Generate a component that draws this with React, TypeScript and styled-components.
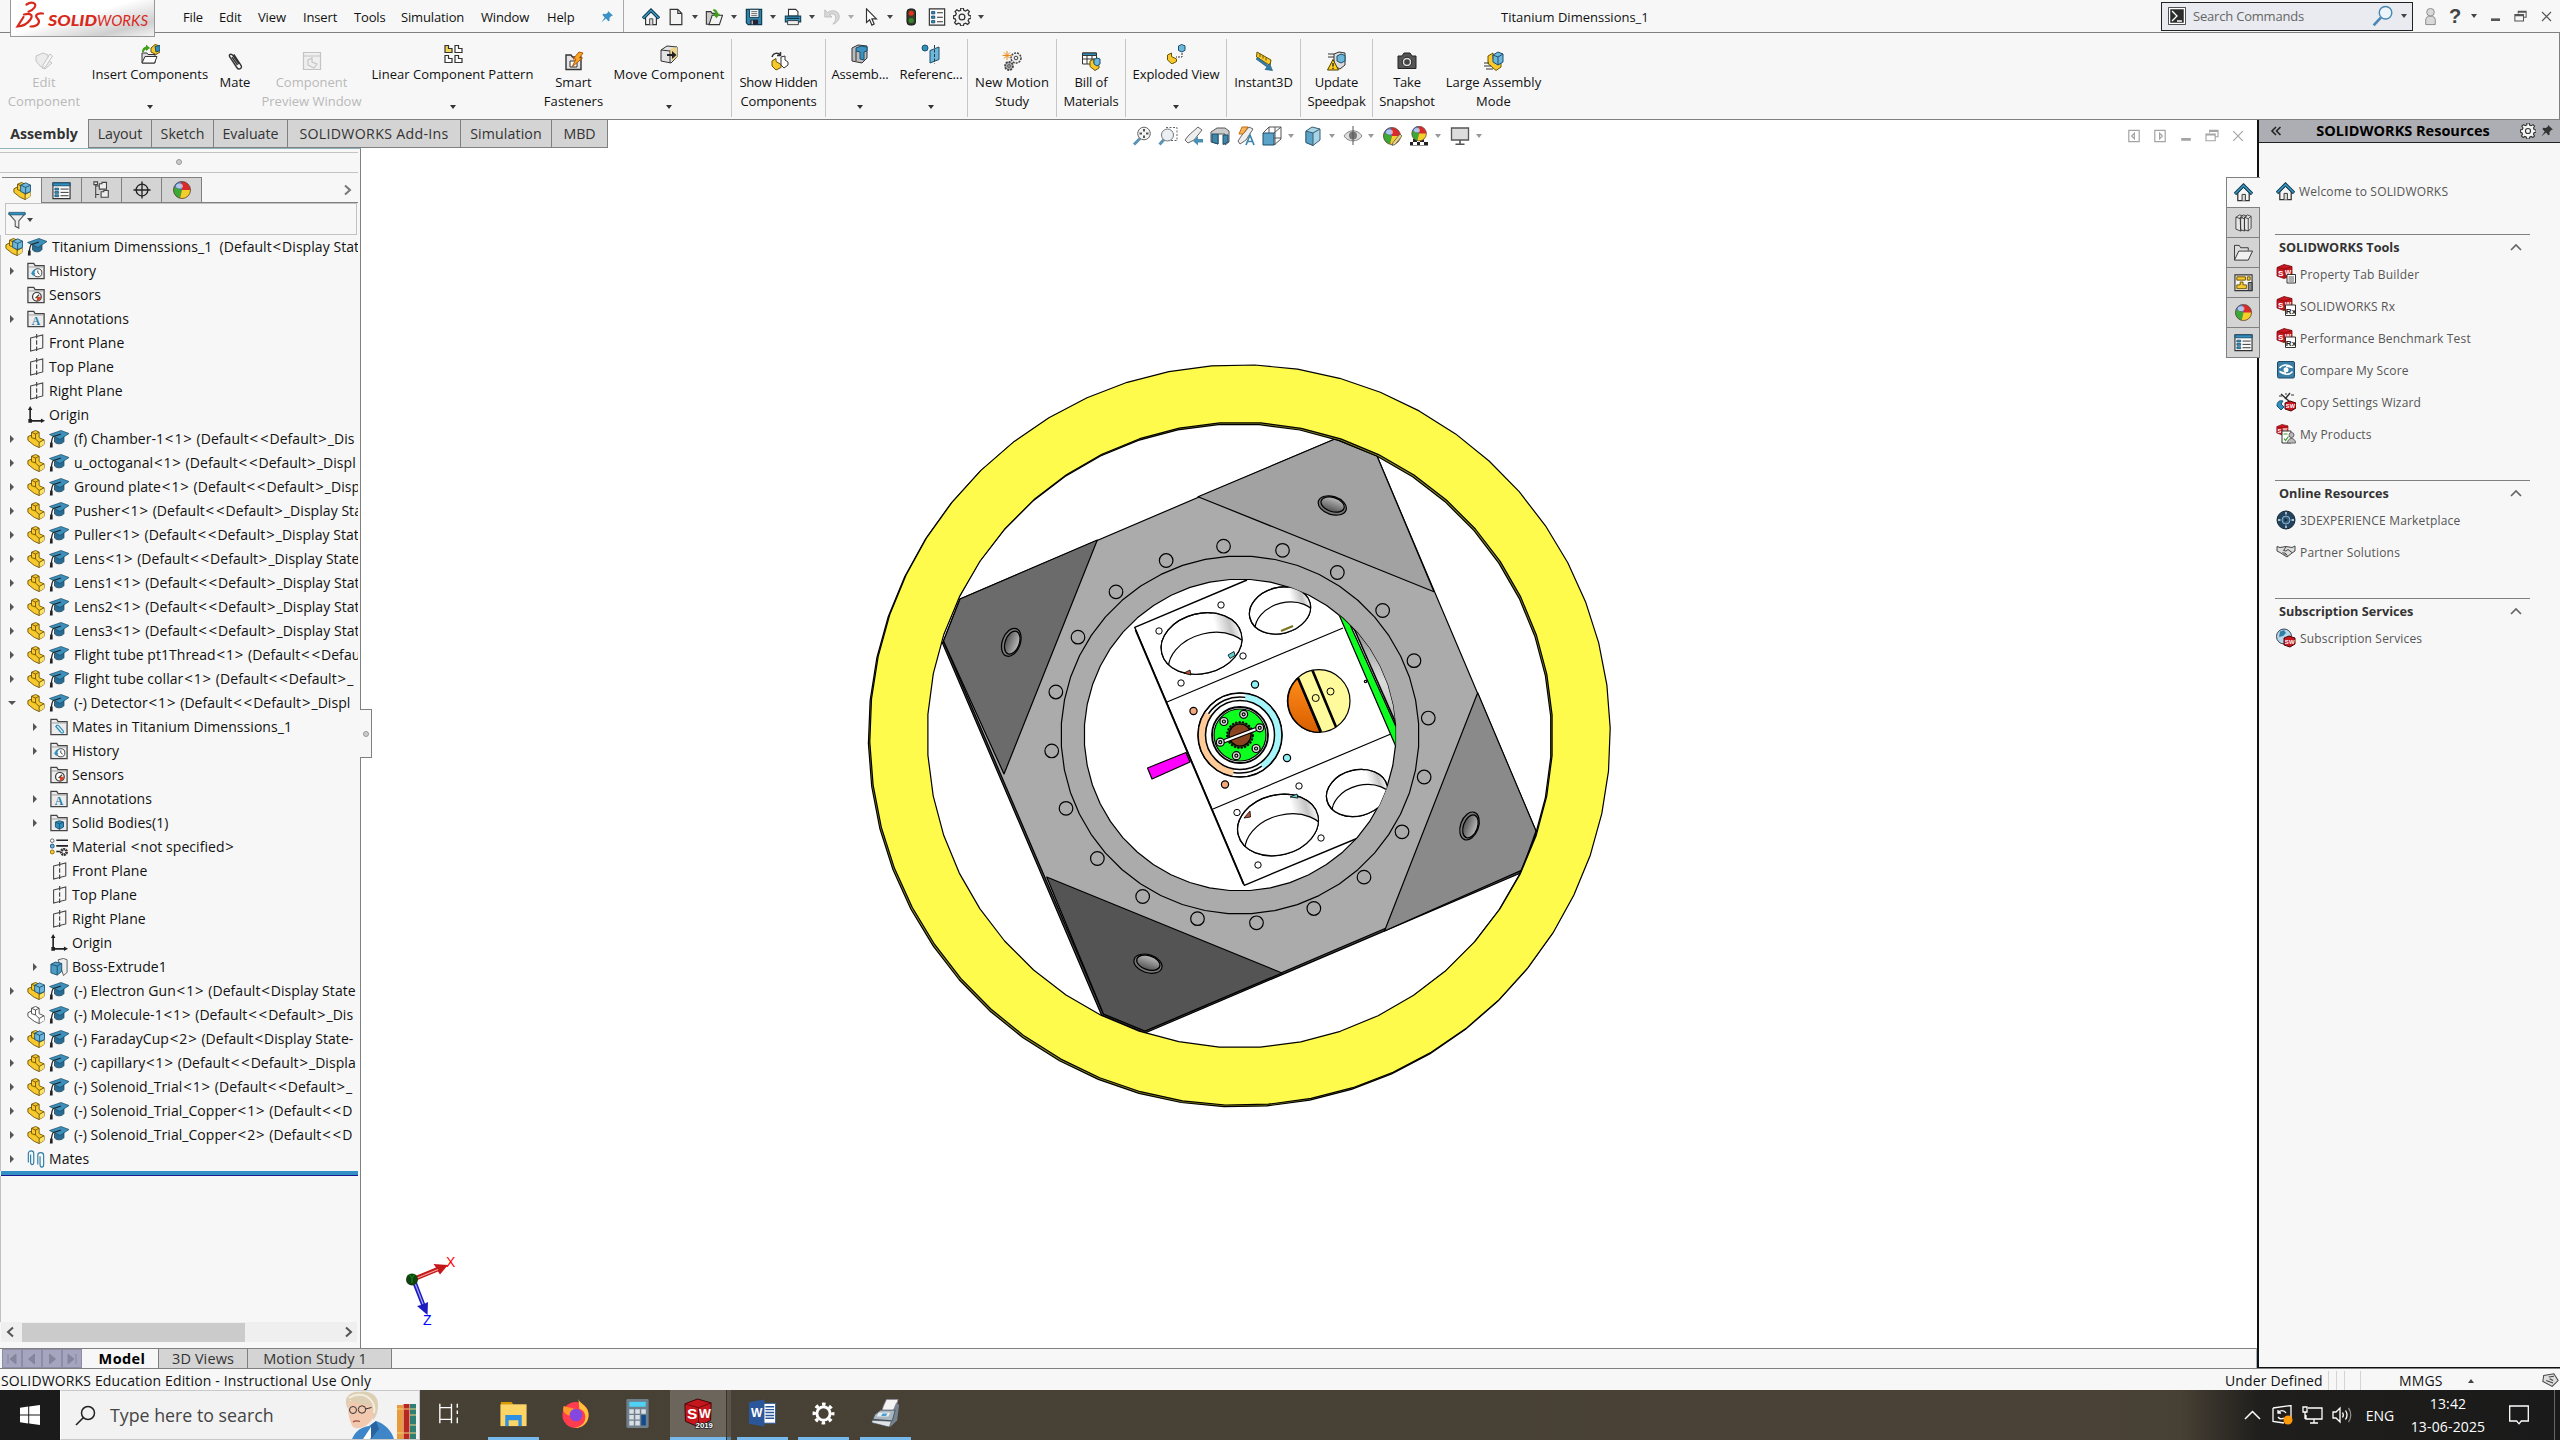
import React from "react";
import styled, { createGlobalStyle } from "styled-components";

const UI = '"Open Sans", "Noto Sans", "Liberation Sans", sans-serif';
const LINE = "#808080";
const PANEL = "#f7f7f7";

const Global = createGlobalStyle`
  html, body { margin: 0; padding: 0; background: #fff; overflow: hidden; }
  *, *::before, *::after { box-sizing: border-box; }
  body { font-family: ${UI}; font-size: 14px; color: #111; }
  svg { display: block; flex: none; }
`;

/* ---------------------------------------------------------------- icons */

const K = "#333";
const B = "#2f8fbd";
const DB = "#1c4f6e";
const Y = "#f7c92c";

const partShape = (fill: string, side: string, line: string) => (
  <g stroke={line} strokeWidth="1" strokeLinejoin="round">
    <path d="M1 7.500 5 5.500V2.500l4.500-2 4 2v6L19 11v5l-5.500 3.500L8 17l-7-5.500z" fill={fill} />
    <path d="M13.500 14.200l5.500-3v4.800l-5.500 3.300z" fill={side} stroke="none" />
    <path d="M5 2.500l4.500 2 4-2M9.500 4.500V10l4 3.800 5.500-3M13.500 13.800v5.500M5 5.500v3l4.500 1.500" fill="none" />
  </g>
);
const folder = (
  <g>
    <path d="M1 18.500V1.500h6.500L9 4h10v14.500z" fill="#ececec" stroke="#444" strokeWidth="1.400" />
    <path d="M1.500 5.500h17" stroke="#999" fill="none" />
  </g>
);
const swCube = (
  <g>
    <path d="M1 3.500 8 .5l8 2v9l-8 3-7-2.500z" fill="#c8171e" stroke="#7a0c10" strokeWidth=".8" />
    <path d="M1 3.500l8 1.700 7-2.700M9 5.200v9" stroke="#7a0c10" strokeWidth=".7" fill="none" />
    <text x="2" y="11.500" fontSize="8" fontWeight="700" fill="#fff">S</text>
    <text x="9" y="11" fontSize="6.500" fontWeight="700" fill="#fff">W</text>
  </g>
);
const ball = (
  <g>
    <circle cx="10" cy="10" r="8.500" fill="#d92b2b" />
    <path d="M10 10 2 7a8.500 8.500 0 0 1 7-5.500z" fill="#4a83d8" />
    <path d="M10 10 2 7a8.500 8.500 0 0 0 6 11.300z" fill="#3aa935" />
    <path d="M10 10 8 18.300A8.500 8.500 0 0 0 18.500 10z" fill="#f2cf2a" />
    <ellipse cx="7.500" cy="6" rx="3.500" ry="2.500" fill="#fff" opacity=".55" />
    <circle cx="10" cy="10" r="8.500" fill="none" stroke="#5a4a3a" strokeWidth=".8" />
  </g>
);
const cubeBlue = (
  <g stroke={DB} strokeWidth="1" strokeLinejoin="round">
    <path d="M8.500 3.500 14 1l5.500 2.500v7L14 13 8.500 10.500z" fill="#6cb8dc" />
    <path d="M8.500 3.500 14 6l5.500-2.500M14 6v7" fill="none" />
  </g>
);
const gearPath =
  "M8.500 1h3l.5 2.500 2 .9 2.200-1.400 2 2-1.400 2.200.9 2 2.300.5v2.800l-2.300.5-.9 2 1.400 2.200-2 2-2.200-1.400-2 .9-.5 2.300h-3l-.5-2.300-2-.9-2.200 1.400-2-2 1.400-2.200-.9-2L.5 12.500V9.700l2.300-.5.9-2L2.300 5l2-2 2.200 1.400 2-.9z";

const ICONS: Record<string, React.ReactNode> = {
  home: (
    <g>
      <path d="M4 10v8.500h12V10l-6-6z" fill="#f5f5f5" stroke={K} strokeWidth="1.300" />
      <path d="M8.500 18.500V12h3.500v6.500" fill="#ddd" stroke={K} />
      <path d="M1 11.500 10 2.500l9 9" fill="none" stroke="#0f3b53" strokeWidth="3.600" />
      <path d="M1.500 11 10 2.600l8.500 8.400" fill="none" stroke="#3d9cc8" strokeWidth="1.500" />
    </g>
  ),
  new: <path d="M3.500 1.500h8.500l4.500 4.500v12.500h-13zM12 1.500V6h4.500" fill="#f4f4f4" stroke={K} strokeWidth="1.300" />,
  open: (
    <g>
      <path d="M1.500 18V4h5l1.500 2h6v12z" fill="#ccc" stroke={K} strokeWidth="1.200" />
      <path d="M4.500 18.500 8 8h11.500L16 18.500z" fill="#f3f3f3" stroke={K} strokeWidth="1.200" />
      <path d="M9 1.500c4 0 5 2 5 5h3L12.700 11.500 8.500 6.500h2.800c0-2-.8-3-2.300-3.200z" fill="#3fa21c" />
    </g>
  ),
  save: (
    <g>
      <path d="M1.500 1.500h17v17H3.500l-2-2z" fill="#3182a8" stroke="#103c52" strokeWidth="1.300" />
      <path d="M5 1.500h10.500v9H5z" fill="#f1f1f1" stroke="#103c52" />
      <path d="M7 4h6.500M7 6.200h6.500M7 8.400h6.500" stroke="#666" />
      <path d="M6 13h8.500v5.500H6z" fill="#223" />
      <path d="M8 14v4" stroke="#ddd" strokeWidth="1.300" />
    </g>
  ),
  print: (
    <g>
      <path d="M5 9V1.500h8l2.500 2.500v5z" fill="#fff" stroke={K} strokeWidth="1.200" />
      <path d="M1.500 9h17v6.500h-17z" fill="#3a93bb" stroke="#12445c" strokeWidth="1.300" />
      <path d="M4 14h12v4.500H4z" fill="#eee" stroke={K} />
      <path d="M3 11.500h14" stroke="#0d3244" strokeWidth="1.300" />
    </g>
  ),
  undo: <path d="M2 2v8h8L7 7.300c4-2 8 0 7 5.200-.3 2-1.500 3.700-3 5.500 4-1.500 7-4.200 7-8.500C18 3.500 11 1 5 5z" fill="#d8d8d8" stroke="#bbb" />,
  cursor: <path d="M5 1v15l3.500-3 2.500 6 2.500-1.200-2.500-5.800H16z" fill="#fff" stroke={K} strokeWidth="1.300" />,
  light: (
    <g>
      <rect x="5.500" y="1" width="9.500" height="18" rx="3.500" fill="#3a3a2c" stroke="#111" />
      <circle cx="10.200" cy="5.800" r="2.800" fill="#e6321c" />
      <circle cx="10.200" cy="13.800" r="2.800" fill="#2f8a2a" />
    </g>
  ),
  list: (
    <g>
      <path d="M1.500 1h17v18h-17z" fill="#fafafa" stroke={K} strokeWidth="1.300" />
      <path d="M4 4h3.500v2.500H4zM4 9h3.500v2.500H4zM4 14h3.500v2.500H4z" fill={B} stroke={DB} />
      <path d="M10 5.200h6.500M10 10.200h6.500M10 15.200h6.500" stroke={K} strokeWidth="1.200" />
    </g>
  ),
  proplist: (
    <g>
      <path d="M1 2h18v16.500H1z" fill="#fafafa" stroke={K} strokeWidth="1.200" />
      <path d="M1 2h18v3H1z" fill={B} stroke={DB} />
      <path d="M3 7.500h4v2H3zM3 11h4v2H3zM3 14.500h4v2H3z" fill={B} stroke={DB} strokeWidth=".8" />
      <path d="M9 8.500h8.500M9 12h8.500M9 15.500h8.500" stroke={K} />
    </g>
  ),
  gear: (
    <g transform="translate(0 -1)">
      <path d={gearPath} fill="#f5f5f5" stroke="#333" strokeWidth="1.400" />
      <circle cx="10" cy="11" r="3.200" fill="#f5f5f5" stroke="#333" strokeWidth="1.400" />
    </g>
  ),
  pin: <path d="M11.500 1.500 18.500 8l-2.300.5-2.700 3 .2 4-1.700.5-3.500-3.800L2 18l4.700-7.200L3.500 7.200l1-1.700 4 .3 2.700-2.300z" fill="#3a93c4" />,
  pinDark: <path d="M11.500 1.500 18.500 8l-2.300.5-2.700 3 .2 4-1.700.5-3.500-3.800L2 18l4.700-7.200L3.500 7.200l1-1.700 4 .3 2.700-2.300z" fill="#333" />,
  prompt: (
    <g>
      <path d="M.5 .5h19v19H.5z" fill="#fff" stroke={K} />
      <path d="M2.500 2.500h15v15h-15z" fill="#2c2c2c" />
      <path d="M4.500 4.500 10 10l-5.500 5.500M10 15.500h5.500" fill="none" stroke="#fff" strokeWidth="1.500" />
    </g>
  ),
  mag: (
    <g>
      <path d="M1.500 18.500 8 11.500" stroke="#4a86b4" strokeWidth="2.400" />
      <circle cx="12.300" cy="7" r="5.700" fill="#eef5fa" stroke="#4a86b4" strokeWidth="1.300" />
    </g>
  ),
  user: (
    <g fill="#d9d9d9" stroke="#888">
      <path d="M5 18.500v-5c0-2.500 2-4 5-4s5 1.500 5 4v5z" />
      <circle cx="10" cy="5.500" r="4" />
    </g>
  ),
  min: <path d="M4 12.500h12v3.500H4z" fill="currentColor" />,
  restore: <path d="M7 6V3h10.500v8H14M2.500 7.500H14V16H2.500zM2.500 8.800H14M7 4.300h10.500" fill="none" stroke="currentColor" strokeWidth="1.400" />,
  close: <path d="M4 4l12 12M16 4 4 16" stroke="currentColor" strokeWidth="1.500" />,
  dockL: <path d="M3.500 3h13v14h-13zM10.500 6.500v7L7 10z" fill="none" stroke="currentColor" strokeWidth="1.500" />,
  dockR: <path d="M3.500 3h13v14h-13zM9.500 6.500v7L13 10z" fill="none" stroke="currentColor" strokeWidth="1.500" />,
  editComp: (
    <g stroke="#c4c4c4" fill="#ececec">
      <path d="M2 5l7-3 5 2v5l4 3-7 6-5-3-4-5z" />
      <path d="M16 3l2.500 2-7 11-3 1.500.5-3.500z" fill="#f6f6f6" />
    </g>
  ),
  insertComp: (
    <g>
      <path d="M2 19V9h5l1 1.500h7V19z" fill="#ddd" stroke={K} />
      <path d="M2 19l3-6.500h12L14.500 19z" fill="#fff" stroke={K} />
      <path d="M2 8c0-3 1.500-5 4-5.500V.5l4 3.500-4 3V5.500C4.500 6 4 7 4 8z" fill="#3fa21c" />
      <path d="M11 4l4-3.500L20 2v6l-4 2.500L11 8z" fill={Y} stroke="#6b5200" />
      <path d="M15 2.500l5-1v5l-4 1.500z" fill={B} stroke={DB} />
    </g>
  ),
  clip: <path d="M14 13 8 4.500C6 2 3.500 3.500 4.800 6l7 10.500c2 3 6 1 4.200-2.200L8.800 3.500M12.500 14 7 6.200" fill="none" stroke={K} strokeWidth="1.400" />,
  preview: (
    <g fill="#efefef" stroke="#c4c4c4" strokeWidth="1.200">
      <path d="M1.500 1.500h17v17h-17zM1.500 5h17" />
      <path d="M6 9l4-2v4l5 2-3 4-6-3z" />
    </g>
  ),
  pattern: (
    <g strokeWidth="1.200" stroke={K} fill="#fff">
      <path d="M2 1.500h3.500v3H9v4H2z" fill="#f4d657" />
      <path d="M12 1.500h3.500v3H19v4h-7zM2 11.500h3.500v3H9v4H2zM12 11.500h3.500v3H19v4h-7z" />
    </g>
  ),
  smart: (
    <g>
      <path d="M2 18.500V4h5l1.500 2H17v12.500z" fill="#e5e5e5" stroke={K} strokeWidth="1.400" />
      <path d="M6 10h7v6H6z" fill="#fff" stroke={K} />
      <path d="M15 1l4 1-3.500 5h3L8 16l4-8H9z" fill="#f6a623" stroke="#b34a00" strokeWidth=".9" />
    </g>
  ),
  moveComp: (
    <g>
      <path d="M2 6l6-4 10 1v10l-6 6-10-2z" fill="#e3e3e3" stroke={K} />
      <path d="M2 6l9 1 7-4M11 7v12" fill="none" stroke={K} />
      <path d="M11 5l7-2v10l-5 4z" fill="#efd58a" />
      <path d="M8 10h5V7l4.500 4-4.500 4v-3H8z" fill="#222" />
    </g>
  ),
  hidden: (
    <g>
      <path d="M3 10l4-2.500v3l5 3v3L7 19l-4-4z" fill={Y} stroke="#6b5200" />
      <path d="M12 6l4-1v4l3 2v3l-4 3-3-3z" fill="#fff" stroke={K} />
      <path d="M3 6c1-4 6-5 8-2M11.500 1v3.500H8" fill="none" stroke={K} strokeWidth="1.500" />
    </g>
  ),
  assemb: (
    <g>
      <path d="M2 4l6-3 9 1v12l-5 5-10-2z" fill="#bbb" stroke={K} />
      <path d="M6 4l5-2 6 1v4l-3 1v8l-4-1V8L6 7z" fill="#3d93bf" stroke={DB} />
      <path d="M6 7v10" stroke={K} />
    </g>
  ),
  reference: (
    <g>
      <circle cx="4" cy="4" r="3" fill={B} stroke={DB} />
      <path d="M9 6.500 18 3v12.500L9 19z" fill="#6cb8dc" stroke={DB} />
      <path d="M13.500 1v18.500" stroke={K} strokeDasharray="3 1.500" />
    </g>
  ),
  motion: (
    <g fill="#eee" stroke="#444">
      <circle cx="14" cy="7" r="5" strokeDasharray="2 1" strokeWidth="1.500" />
      <circle cx="14" cy="7" r="1.800" />
      <circle cx="7" cy="15" r="4" strokeDasharray="2 1" strokeWidth="1.800" fill="#aaa" />
      <circle cx="7" cy="15" r="1.300" />
      <path d="M5 0v9M.5 4.500h9M2 1.500l6 6M8 1.500l-6 6" stroke="#e88a1c" />
    </g>
  ),
  bom: (
    <g>
      <path d="M1.500 2h14v11h-14z" fill="#fff" stroke={K} />
      <path d="M1.500 2h14v2.500h-14z" fill={B} stroke={K} />
      <path d="M1.500 8h14M6 4v9M11 4v9" stroke={K} />
      <path d="M9 10l4-2v4l5 2.500V17l-4 2.500-5-4z" fill={Y} stroke="#6b5200" />
      <path d="M13 8.500l3-1.500 3 1v5l-3 2-3-2z" fill="#6cb8dc" stroke={DB} />
    </g>
  ),
  exploded: (
    <g>
      <path d="M1.500 11l4-2v3.500l5 2.500v2.500L6 20l-4.500-4z" fill={Y} stroke="#6b5200" />
      <path d="M12.500 2l3-1.500 3.500 1.300v4.500L16 8l-3.500-1.500z" fill="#6cb8dc" stroke={DB} />
      <path d="M16 9v4h-6" fill="none" stroke={K} strokeDasharray="2 1" />
    </g>
  ),
  instant: (
    <g>
      <path d="M3 1l14 8-1 5.500L2.500 6z" fill={Y} stroke="#6b5200" />
      <path d="M6 3v3M9 4.500v3M12 6.500v3" stroke="#6b5200" />
      <path d="M2 8l11 8-2 2.500 7.500 1-3-7-1.500 2L4 6.500z" fill="#2f7fa8" stroke={DB} strokeWidth=".6" />
    </g>
  ),
  update: (
    <g>
      <path d="M7 3l5-2 6 1v12l-5 4-6-3z" fill="#ddd" stroke={K} />
      <path d="M10 5l4-2 4 1.500V10l-4 2-4-2z" fill="#6cb8dc" stroke={DB} />
      <path d="M1 3h6M1 6h6" stroke={K} />
      <path d="M6 8.500 11.500 19H.5z" fill="#ffd21c" stroke="#4a3a00" />
      <path d="M6 12v3.500M6 16.700v1.300" stroke="#222" strokeWidth="1.400" />
    </g>
  ),
  camera: (
    <g>
      <path d="M1 5h4l2-3h6l2 3h4v12.500H1z" fill="#555" stroke="#222" />
      <circle cx="10" cy="11" r="4.800" fill="#ddd" stroke="#222" />
      <circle cx="10" cy="11" r="2.800" fill="#444" />
    </g>
  ),
  large: (
    <g>
      <path d="M4 5l5-3v6l8 4v4l-5 3.500-8-7z" fill={Y} stroke="#6b5200" />
      <path d="M9 4l5-3 5 2v8l-5 3-5-3z" fill="#6cb8dc" stroke={DB} />
      <path d="M9 4l5 2 5-3M14 6v8" fill="none" stroke={DB} />
      <path d="M0 12h5M0 15h7M2 18h7" stroke={K} />
    </g>
  ),
  zoomFit: (
    <g>
      <path d="M2 18.500 8 12.500" stroke="#5b93b4" strokeWidth="3" />
      <circle cx="12" cy="7.500" r="6.300" fill="#f4f4f4" stroke="#666" />
      <path d="M12 3v9M7.500 7.500h9" stroke="#555" strokeDasharray="2.500 4" strokeWidth="2" />
    </g>
  ),
  zoomArea: (
    <g>
      <path d="M8 1.500h11v13H8" fill="none" stroke="#666" strokeDasharray="2 1.500" />
      <path d="M1.500 18.500 6 13.500" stroke="#5b93b4" strokeWidth="3" />
      <circle cx="9.500" cy="9" r="6" fill="#eaf0f4" stroke="#777" />
    </g>
  ),
  prev: (
    <g>
      <path d="M14 1l4 3-8 10-6 3-3-3 4-5z" fill="#eee" stroke="#666" />
      <path d="M19 13h-5v-3l-5 5 5 4.500v-3h5z" fill="#4a8fb5" />
    </g>
  ),
  section: (
    <g>
      <path d="M1 6l6-4h8l4 3v11l-4 3V8H8v10l-7-2z" fill="#ccc" stroke="#555" />
      <path d="M2 8h6v10l-6-2zM13 9h5v7l-5 2.500z" fill="#3f86ab" stroke={DB} />
    </g>
  ),
  dyn: (
    <g>
      <path d="M13 1l4 2-7 11-6 4-2-3 4-6z" fill="#eee" stroke="#666" />
      <path d="M6 1h6l-5 7H3z" fill="#f7b45a" stroke="#c46a10" />
      <path d="M10 19l4-10 4 10M11.500 15.500h5" fill="none" stroke="#3f86ab" strokeWidth="1.700" />
    </g>
  ),
  orient: (
    <g>
      <path d="M1 7h11v12H1z" fill="#5ba3c8" stroke={DB} />
      <path d="M1 7l6-6h12v12l-7 6M12 7l7-6M7 1v6M13 1v18M12 12h7" fill="none" stroke="#555" />
    </g>
  ),
  display: (
    <g strokeLinejoin="round" stroke="#3a5e70">
      <path d="M3 5l6-4 8 2v11l-7 5.500-7-3z" fill="#a9d4e8" />
      <path d="M3 5l7 2v12.500l-7-3z" fill="#5ba3c8" />
      <path d="M10 7l7-4" fill="none" />
    </g>
  ),
  eye: (
    <g>
      <path d="M1 10c4-7 14-7 18 0-4 6.500-14 6.500-18 0z" fill="#ddd" stroke="#888" />
      <circle cx="10" cy="9.500" r="4" fill="#777" />
      <path d="M10 0v19" stroke="#555" />
    </g>
  ),
  ball,
  ballPen: (
    <g>
      {ball}
      <path d="M18 8l2 2-7 8.500-3 1 1-3z" fill="#f0d58a" stroke="#555" strokeWidth=".8" />
    </g>
  ),
  scene: (
    <g>
      <path d="M1 13h18v6.500H1z" fill="#222" />
      <path d="M1 13h3v3H1zM8 13h3v3H8zM15 13h4v3h-4zM4 16h4v3H4zM11 16h4v3h-4z" fill="#fff" />
      <g transform="translate(1.500 -1) scale(.86)">{ball}</g>
    </g>
  ),
  monitor: (
    <g>
      <path d="M1.500 2h17v12h-17z" fill="#ddd" stroke="#555" strokeWidth="1.300" />
      <path d="M10 14v4M5.500 18.300h9" stroke="#555" strokeWidth="1.600" />
    </g>
  ),
  part: partShape(Y, "#fbe26a", "#6b5200"),
  partHidden: partShape("#fff", "#fff", "#444"),
  asm: (
    <g>
      {partShape(Y, "#fbe26a", "#6b5200")}
      {cubeBlue}
    </g>
  ),
  cap: (
    <g>
      <path d="M5.500 8.500V13c3 3 8 2 9.500-.5V7.500z" fill="#2a6d92" stroke="#123c52" strokeWidth=".7" />
      <path d="M.5 5.500 12 1.500l8 3L11 10.500z" fill="#3b8fbb" stroke="#174a64" strokeWidth=".7" />
      <path d="M12 5 4 7.700c-1.500 2.500-1.300 5-2 8.500" fill="none" stroke="#222" strokeWidth="1.200" />
      <path d="M1.300 13.500h2.300v5H.8z" fill="#222" />
    </g>
  ),
  fHistory: (
    <g>
      {folder}
      <circle cx="12" cy="12" r="4.500" fill="#fff" stroke={K} />
      <path d="M12 9.500V12l2 1.500" fill="none" stroke={K} />
      <path d="M4 12l3 3.500 2.500-3H8c0-2 1-3.500 3-4.500-4-.5-5.500 2-5.500 4z" fill={B} />
    </g>
  ),
  fSensor: (
    <g>
      {folder}
      <circle cx="11" cy="12" r="4.800" fill="#fff" stroke={K} strokeWidth="1.300" />
      <path d="M11 12h4.500c0 2.500-2 4.500-4.500 4.500z" fill="#e0401c" />
      <path d="M9.500 13.500 13.500 9.500" stroke={K} strokeWidth="1.300" />
    </g>
  ),
  fAnno: (
    <g>
      {folder}
      <text x="5.200" y="16.800" fontSize="13" fontWeight="700" fontFamily="Liberation Serif, serif" fill="#2a7fa8">A</text>
    </g>
  ),
  fMates: (
    <g>
      {folder}
      <path d="M6 9l6 7c2 1.500 4 0 2.500-2L9.500 8.500C8 7 6 8.500 7.500 10.500l4.500 5" fill="none" stroke={B} strokeWidth="1.300" />
    </g>
  ),
  fSolid: (
    <g>
      {folder}
      <path d="M6 9l4.500-1.500L15 9v5.500L10.500 17 6 14.500z" fill={B} stroke={DB} />
      <path d="M6 9l4.500 2L15 9M10.500 11v6" fill="none" stroke={DB} />
    </g>
  ),
  plane: (
    <g fill="none" stroke="#444">
      <path d="M4 4.500 17.500 1v14.500L4 19z" strokeWidth="1.200" />
      <path d="M10.700 0v20" strokeDasharray="5 2" strokeWidth="1.300" />
    </g>
  ),
  origin: (
    <g>
      <path d="M3.500 3v13.500H17" fill="none" stroke="#222" strokeWidth="1.800" />
      <path d="M3.500 0 6 4.500H1zM20 16.500 15.500 14v5zM1.500 14.500h4v4h-4z" fill="#222" />
    </g>
  ),
  material: (
    <g>
      <circle cx="2.500" cy="3" r="2" fill="#fff" stroke="#555" />
      <circle cx="2.500" cy="9" r="2.200" fill="#5fb2dc" stroke={DB} />
      <circle cx="2.500" cy="15.500" r="2.200" fill={Y} stroke="#8a6a00" />
      <path d="M7 2.500h13M7 8.800h13M7 15h4" stroke="#222" strokeWidth="1.800" />
      <circle cx="15.500" cy="15.500" r="3" fill="none" stroke="#333" strokeWidth="3" strokeDasharray="2 .6" />
    </g>
  ),
  boss: (
    <g>
      <path d="M9 2l6-1.500 4 1.500v14l-4 3.500z" fill="#eee" stroke="#555" />
      <path d="M1 7l5-2.500L13 6v9l-5 4-7-2.500z" fill="#4c9cc4" stroke={DB} />
      <path d="M1 7l7 2 5-3M8 9v10" fill="none" stroke={DB} />
    </g>
  ),
  mates: (
    <path d="M1.500 14V4c0-4 6-4 6 0v10c0 3-3.500 3-3.500 0V5M12 16V6c0-4 6.500-4 6.500 0v10c0 4-4 4-4 0V7" fill="none" stroke="#2f7fa8" strokeWidth="1.300" />
  ),
  config: (
    <g fill="none" stroke="#444" strokeWidth="1.200">
      <path d="M3 1v18M3 5.500h4M3 15h4" />
      <path d="M1 1h4v3H1zM7 3h3V1.500h5V9H7zM9 12h3v-1.500h5V18H9z" fill="#eee" />
    </g>
  ),
  target: (
    <g fill="none" stroke="#222" strokeWidth="1.500">
      <circle cx="10" cy="10" r="6.500" />
      <path d="M10 .5v19M.5 10h19" />
    </g>
  ),
  filter: (
    <g>
      <path d="M1 3h18l-7 8v8l-4-2v-6z" fill="#eee" stroke="#555" strokeWidth="1.200" />
      <path d="M1 1.500h18v2.800H1z" fill="#2f8fbd" stroke={DB} strokeWidth=".8" />
    </g>
  ),
  books: (
    <g fill="#e6e6e6" stroke={K} strokeWidth=".9" strokeLinejoin="round">
      <path d="M2 4.500 6 2l4 1.500v13L7 19l-5-2z" />
      <path d="M6.500 4.500 10 2l3.500 1.500v13L11 19l-4-1.500z" />
      <path d="M11 4.500 14 2l4 1.500V16l-3 3-4-1.500z" />
      <path d="M2 4.500l5 1.500v13M6.500 4.500 11 6v13M11 4.500l4 1.500v13M7 6l3-2.500M11 6l2.500-2.500M15 6l3-2.500" fill="none" />
    </g>
  ),
  folderOpen: (
    <g>
      <path d="M.5 18V2.500h5L7 5h8v3" fill="#ddd" stroke={K} />
      <path d="M.5 18 5 8.500h14.500L15 18z" fill="#f0f0f0" stroke={K} />
    </g>
  ),
  palette: (
    <g>
      <path d="M1 2h18v16.500H1z" fill="#f5f5f5" stroke={K} strokeWidth="1.200" />
      <path d="M3 4h9v3.500H3zM14 4h3v3.500h-3zM6.500 9.500h3v3H13v4H3v-4h3.500z" fill={Y} stroke="#6b5200" />
      <path d="M15 10h4v8.500h-4z" fill="#888" stroke={K} />
    </g>
  ),
  swTab: (
    <g>
      {swCube}
      <path d="M11 10.500h8.500v8.500H11z" fill="#fff" stroke={K} />
      <path d="M12.500 13h5.500M12.500 15h5.500M12.500 17h5.500" stroke={K} strokeWidth=".8" />
    </g>
  ),
  swRx: (
    <g>
      {swCube}
      <path d="M9.500 9h10v10.500h-10z" fill="#fff" stroke={K} />
      <text x="9.800" y="17.500" fontSize="8" fontWeight="700" fill="#222">Rx</text>
    </g>
  ),
  compare: (
    <g>
      <rect x="1.500" y="1.500" width="17" height="16.500" rx="1.500" fill="#3a7ea6" stroke="#1d4f6c" />
      <path d="M3.500 8c3-4 9-4 13-.5-3-.8-5-1.300-6.500-1.300M16.500 11.500c-3 4-9 3.500-13 0 3 .8 5 1.500 6.500 1.500" fill="none" stroke="#fff" strokeWidth="1.400" />
      <circle cx="10" cy="9.700" r="2.500" fill="#fff" />
    </g>
  ),
  wizard: (
    <g>
      <path d="M1 14c0-4 2-6 6-5l-2 3 3 3-3 3z" fill={B} stroke={DB} />
      <path d="M5 2l9 8M14 1 9 7" stroke={K} strokeWidth="1.500" />
      <path d="M3 4h3M15 3h3M10 1v2" stroke={K} />
      <path d="M9 11l5-2 6 2v5l-5 3-6-2z" fill="#c8171e" stroke="#4a0507" />
      <text x="9.800" y="16.300" fontSize="5.500" fontWeight="700" fill="#fff">SW</text>
    </g>
  ),
  products: (
    <g>
      <g transform="scale(.75)">{swCube}</g>
      <path d="M6 7h9v12H6z" fill="#fff" stroke={K} />
      <path d="M7.500 10h4M8 14.500l1.500 2 3-4" fill="none" stroke="#3a9a2a" strokeWidth="1.200" />
      <circle cx="15.500" cy="11" r="2.500" fill="#bbb" stroke="#666" />
      <path d="M11.500 19c0-6 8-6 8 0z" fill="#bbb" stroke="#666" />
    </g>
  ),
  market: (
    <g>
      <circle cx="10" cy="10" r="9" fill="#24435f" stroke="#14283a" />
      <circle cx="10" cy="10" r="4" fill="#34607f" stroke="#8fb0c8" />
      <path d="M8.500 8v4l3.500-2z" fill="#14283a" />
      <path d="M10 2v2.500M10 15.500V18M2 10h2.500M15.500 10H18" stroke="#a9c3d6" strokeWidth="1.800" />
    </g>
  ),
  shake: (
    <g fill="#ddd" stroke="#444">
      <path d="M1 4.500l3 1 6-1 6 1 3-1.500V9l-3 2-5 4L4 10.500 1 9z" />
      <path d="M10 5 7.500 8.500l2.500.5 2-1.500 4 3M8.500 10.500l3 3M6.500 10l3.500 3.500" fill="none" />
    </g>
  ),
  subs: (
    <g>
      <circle cx="8" cy="8.500" r="7.500" fill="#b8d6e6" stroke="#345" />
      <path d="M4 3.500 8 2l2 3-3 3-4 1zM8 11l3-1v5H8z" fill="#2f7fa8" />
      <path d="M8 10l5-2 6 2v6l-5 3-6-2z" fill="#c8171e" stroke="#4a0507" />
      <text x="8.800" y="15.700" fontSize="6" fontWeight="700" fill="#fff">SW</text>
    </g>
  ),
  tag: (
    <g fill="#ddd" stroke="#444" strokeWidth="1.200">
      <path d="M2 4l12-2 5 8-7 7L1 11z" />
      <path d="M5 10l8 3M14 5l-6 1M9 8l4 2" fill="none" />
    </g>
  ),
};

const Icon = ({ name, size = 20 }: { name: string; size?: number }) => (
  <svg width={size} height={size} viewBox="0 0 20 20" fontFamily="Liberation Sans, sans-serif">
    {ICONS[name]}
  </svg>
);

const Caret = styled.i<{ $c?: string }>`
  flex: none;
  width: 0;
  height: 0;
  border: 3px solid transparent;
  border-top: 4px solid ${(p) => p.$c ?? "#444"};
  border-bottom: 0;
`;

/* ------------------------------------------------------------ title bar */

const Screen = styled.div`
  width: 2560px;
  height: 1440px;
  display: flex;
  flex-direction: column;
  background: #fff;
`;
const TitleBar = styled.header`
  height: 33px;
  flex: none;
  display: flex;
  align-items: center;
  background: ${PANEL};
  border-bottom: 1px solid ${LINE};
`;
const LogoBox = styled.div`
  align-self: flex-start;
  width: 145px;
  height: 37px;
  margin-left: 10px;
  flex: none;
  position: relative;
  z-index: 2;
  display: flex;
  align-items: center;
  border: 1px solid #999;
  border-top: 0;
  background: linear-gradient(165deg, #fff 45%, #cfcfcf 80%, #f3f3f3);
`;
const Menu = styled.nav`
  display: flex;
  width: 469px;
  flex: none;
  height: 32px;
  align-items: center;
  border-right: 1px solid #aaa;
  padding: 1px 0 0 28px;
`;
const MenuItem = styled.span<{ $w: number }>`
  width: ${(p) => p.$w}px;
  font-size: 13px;
  letter-spacing: -0.15px;
  white-space: nowrap;
`;
const QuickBar = styled.div`
  display: flex;
  align-items: center;
  width: 877px;
  flex: none;
  padding: 1px 0 0 11px;
`;
const Slot = styled.span<{ $w: number }>`
  width: ${(p) => p.$w}px;
  flex: none;
  display: flex;
  justify-content: center;
  align-items: center;
  color: #555;
`;
const DocTitle = styled.span`
  font-size: 13px;
  width: 660px;
  flex: none;
  padding-top: 1px;
  white-space: nowrap;
`;
const SearchBox = styled.div`
  width: 252px;
  height: 29px;
  flex: none;
  display: flex;
  align-items: center;
  padding: 0 5px 0 6px;
  gap: 7px;
  border: 1.500px solid #222;
  background: #e9ebf0;
  color: #666;
  font-size: 13px;
  letter-spacing: -0.2px;
`;
const Grow = styled.span`
  flex: 1;
`;
const Help = styled.b`
  font: 700 20px "Liberation Sans", sans-serif;
  color: #444;
`;

const MENU: [string, number][] = [
  ["File", 36], ["Edit", 39], ["View", 45], ["Insert", 51], ["Tools", 47],
  ["Simulation", 80], ["Window", 66], ["Help", 53],
];
/* ">" stands for a drop-down arrow, "-" for a disabled one */
const QUICK: [string, number][] = [
  ["home", 32], ["new", 18], [">", 20], ["open", 18], [">", 22], ["save", 17], [">", 22], ["print", 18], [">", 20],
  ["undo", 20], ["-", 18], ["cursor", 22], [">", 16], ["light", 26], ["list", 26], ["gear", 24], [">", 14],
];

const Logo = () => (
  <svg width="143" height="36" viewBox="0 0 143 36" fontFamily="Lato, sans-serif">
    <g fill="none" stroke="#d8291c" strokeWidth="2.200" strokeLinecap="round">
      <path d="M15.500 4.500c5-3.500 11-1.500 8 3-1.500 2.200-4 3.500-6 4.200" />
      <path d="M13 14.500c7-2 9.500 1 6 5.500-2.500 3.500-7 6-12.500 6.500l6-9.500" />
      <path d="M32 13.500c-6-1-8.500 2-5.500 5s1.500 8-7 8" />
    </g>
    <text x="37" y="26" fontSize="15.500" fontStyle="italic" fontWeight="900" fill="#d8291c" textLength="49" lengthAdjust="spacingAndGlyphs">SOLID</text>
    <text x="86" y="26" fontSize="15.500" fontStyle="italic" fill="#d8291c" textLength="51" lengthAdjust="spacingAndGlyphs">WORKS</text>
  </svg>
);

const Title = () => (
  <TitleBar>
    <LogoBox><Logo /></LogoBox>
    <Menu>
      {MENU.map(([t, w]) => <MenuItem key={t} $w={w}>{t}</MenuItem>)}
      <Icon name="pin" size={14} />
    </Menu>
    <QuickBar>
      {QUICK.map(([n, w], k) => (
        <Slot key={k} $w={w}>
          {n === ">" || n === "-" ? <Caret $c={n === "-" ? "#aaa" : undefined} /> : <Icon name={n} size={18} />}
        </Slot>
      ))}
    </QuickBar>
    <DocTitle>Titanium Dimenssions_1</DocTitle>
    <SearchBox>
      <Icon name="prompt" size={18} />
      <span>Search Commands</span>
      <Grow />
      <Icon name="mag" size={22} />
      <Caret />
    </SearchBox>
    <Slot $w={34}><Icon name="user" size={19} /></Slot>
    <Slot $w={16}><Help>?</Help></Slot>
    <Slot $w={22}><Caret /></Slot>
    <Slot $w={20}><Icon name="min" size={15} /></Slot>
    <Slot $w={30}><Icon name="restore" size={15} /></Slot>
    <Slot $w={22}><Icon name="close" size={15} /></Slot>
  </TitleBar>
);

/* --------------------------------------------------------------- ribbon */

const RibbonBar = styled.div`
  height: 87px;
  flex: none;
  display: flex;
  padding-top: 6px;
  background: ${PANEL};
  border-bottom: 1px solid ${LINE};
  border-right: 1px solid ${LINE};
`;
const Command = styled.div<{ $w: number; $drop?: boolean; $off?: boolean; $sep?: boolean }>`
  width: ${(p) => p.$w}px;
  height: 78px;
  flex: none;
  display: flex;
  flex-direction: column;
  align-items: center;
  padding-top: ${(p) => (p.$drop ? 5 : 12)}px;
  border-right: 1px solid ${(p) => (p.$sep ? "#c6c6c6" : "transparent")};
  color: ${(p) => (p.$off ? "#b9b9b9" : "#111")};
  font-size: 13px;
  line-height: 19px;
  text-align: center;
  white-space: pre;
`;
const Label = styled.span<{ $drop?: boolean; $ls?: number }>`
  margin-top: ${(p) => (p.$drop ? 1 : 2)}px;
  height: 40px;
  letter-spacing: ${(p) => p.$ls ?? -0.2}px;
`;

type Cmd = { t: string; i: string; w: number; drop?: boolean; off?: boolean; sep?: boolean; ls?: number };
const COMMANDS: Cmd[] = [
  { t: "Edit\nComponent", i: "editComp", w: 89, off: true, ls: 0.1 },
  { t: "Insert Components", i: "insertComp", w: 123, drop: true, ls: 0 },
  { t: "Mate", i: "clip", w: 47, ls: 0 },
  { t: "Component\nPreview Window", i: "preview", w: 106, off: true, ls: 0 },
  { t: "Linear Component Pattern", i: "pattern", w: 176, drop: true, ls: 0.03 },
  { t: "Smart\nFasteners", i: "smart", w: 66, ls: 0.05 },
  { t: "Move Component", i: "moveComp", w: 125, drop: true, sep: true, ls: 0.2 },
  { t: "Show Hidden\nComponents", i: "hidden", w: 94, sep: true },
  { t: "Assemb...", i: "assemb", w: 69, drop: true, ls: -0.1 },
  { t: "Referenc...", i: "reference", w: 73, drop: true, sep: true, ls: -0.1 },
  { t: "New Motion\nStudy", i: "motion", w: 89, sep: true, ls: 0 },
  { t: "Bill of\nMaterials", i: "bom", w: 69, sep: true, ls: -0.1 },
  { t: "Exploded View", i: "exploded", w: 101, drop: true, sep: true, ls: -0.1 },
  { t: "Instant3D", i: "instant", w: 74, sep: true, ls: -0.05 },
  { t: "Update\nSpeedpak", i: "update", w: 72, sep: true },
  { t: "Take\nSnapshot", i: "camera", w: 69 },
  { t: "Large Assembly\nMode", i: "large", w: 104, ls: 0.05 },
];

const Ribbon = () => (
  <RibbonBar>
    {COMMANDS.map((c) => (
      <Command key={c.t} $w={c.w} $drop={c.drop} $off={c.off} $sep={c.sep}>
        <Icon name={c.i} size={20} />
        <Label $drop={c.drop} $ls={c.ls}>{c.t}</Label>
        {c.drop && <Caret $c="#333" />}
      </Command>
    ))}
  </RibbonBar>
);

/* ------------------------------------------------------------ workspace */

const Workspace = styled.div`
  height: 1248px;
  flex: none;
  display: flex;
`;
const MainColumn = styled.div`
  width: 2257px;
  flex: none;
  display: flex;
  flex-direction: column;
`;
const TopArea = styled.div`
  height: 1228px;
  display: flex;
`;
const Side = styled.aside`
  width: 361px;
  flex: none;
  display: flex;
  flex-direction: column;
  position: relative;
  z-index: 2;
`;
const RibbonTabs = styled.div`
  display: flex;
  height: 29px;
  flex: none;
  margin-top: -1px;
  width: 608px;
`;
const RibbonTab = styled.div<{ $w: number; $on?: boolean; $ls?: number }>`
  width: ${(p) => p.$w}px;
  flex: none;
  display: flex;
  align-items: center;
  justify-content: center;
  font-size: 14.200px;
  letter-spacing: ${(p) => p.$ls ?? 0}px;
  font-weight: ${(p) => (p.$on ? 700 : 400)};
  color: #333;
  background: ${(p) => (p.$on ? PANEL : "#d4d4d4")};
  border: solid ${LINE};
  border-width: ${(p) => (p.$on ? "0" : "1px 1px 1px 0")};
  border-right: 1px solid ${LINE};
  white-space: nowrap;
`;
const Tree = styled.div`
  flex: 1;
  display: flex;
  flex-direction: column;
  min-height: 0;
  background: ${PANEL};
  border-right: 1px solid ${LINE};
  border-top: 1px solid #8fb3ba;
`;
const Grip = styled.div`
  height: 21px;
  margin: 3px 2px 0 0;
  border-top: 1px solid #c4c4c4;
  border-bottom: 1px solid #c4c4c4;
  display: flex;
  justify-content: center;
  padding-top: 6px;
`;
const Dot = styled.i`
  width: 6px;
  height: 6px;
  border-radius: 50%;
  border: 1px solid #999;
  background: #ccc;
`;
const TreeTabs = styled.div`
  display: flex;
  height: 26px;
  margin: 4px 2px 0 2px;
  border-bottom: 1px solid ${LINE};
`;
const TreeTab = styled.div<{ $on?: boolean }>`
  width: 40px;
  height: ${(p) => (p.$on ? 26 : 25)}px;
  display: flex;
  align-items: center;
  justify-content: center;
  border: solid ${LINE};
  border-width: 1px 1px 0 0;
  background: ${(p) => (p.$on ? PANEL : "#d4d4d4")};
`;
const Chevron = styled.svg`
  margin-left: auto;
  align-self: center;
  margin-right: 5px;
`;
const FilterBox = styled.div`
  height: 32px;
  margin: 0 3px 0 5px;
  flex: none;
  display: flex;
  align-items: center;
  gap: 1px;
  padding: 1px 0 0 2px;
  border: 1px solid #c2c2c2;
`;
const Rows = styled.div`
  flex: none;
  border-left: 1px solid #c0c0c0;
  overflow: hidden;
  margin-right: 2px;
`;
const Row = styled.div<{ $d: number }>`
  height: 24px;
  display: flex;
  align-items: center;
  padding-left: ${(p) => (p.$d < 0 ? 4 : 9 + p.$d * 23)}px;
  white-space: pre;
  font-size: 14px;
  letter-spacing: 0.05px;
`;
const Expander = styled.i<{ $state?: string }>`
  width: 17px;
  flex: none;
  display: flex;
  &::before {
    content: "";
    border: solid transparent;
    ${(p) =>
      p.$state === "open"
        ? "border-width: 4px 4px 0; border-top-color: #555; margin-left: -2px;"
        : p.$state === "closed"
        ? "border-width: 4px 0 4px 4px; border-left-color: #555;"
        : "border-width: 0;"}
  }
`;
const RowText = styled.span`
  margin: 0 0 0 4px;
  line-height: 20px;
`;
const Angle = styled.span`
  font-size: 15px;
  line-height: 1;
  padding-left: 0.8px;
  letter-spacing: 1px;
`;
const CapGap = styled.span`
  margin: 0 1px 0 4px;
`;
const Rollback = styled.div`
  height: 5px;
  flex: none;
  margin: 0 2px 0 1px;
  background: #3390c6;
  border-bottom: 1px solid #1a1a8c;
`;
const TreeRest = styled.div`
  flex: 1;
  border-left: 1px solid #c0c0c0;
`;
const HScroll = styled.div`
  height: 20px;
  flex: none;
  margin: 0 3px 6px 1px;
  display: flex;
  align-items: center;
  padding: 0 4px 0 5px;
  background: #efefef;
`;
const Thumb = styled.div`
  width: 223px;
  height: 19px;
  margin: 0 auto 0 8px;
  background: #cbcbcb;
`;
const Handle = styled.div`
  position: absolute;
  left: 360px;
  top: 589px;
  width: 12px;
  height: 49px;
  display: flex;
  align-items: center;
  justify-content: center;
  background: ${PANEL};
  border: 1px solid ${LINE};
  border-left: 0;
`;

type Node = { t: string; i: string; d?: number; e?: string; cap?: boolean };
const comp = (t: string, i = "part", e: string | undefined = "closed"): Node => ({ t, i, e, cap: true });
const NODES: Node[] = [
  { t: "Titanium Dimenssions_1  (Default<Display Stat", i: "asm", d: -1, cap: true },
  { t: "History", i: "fHistory", e: "closed" },
  { t: "Sensors", i: "fSensor" },
  { t: "Annotations", i: "fAnno", e: "closed" },
  { t: "Front Plane", i: "plane" },
  { t: "Top Plane", i: "plane" },
  { t: "Right Plane", i: "plane" },
  { t: "Origin", i: "origin" },
  comp("(f) Chamber-1<1> (Default<<Default>_Dis"),
  comp("u_octoganal<1> (Default<<Default>_Displ"),
  comp("Ground plate<1> (Default<<Default>_Disp"),
  comp("Pusher<1> (Default<<Default>_Display Sta"),
  comp("Puller<1> (Default<<Default>_Display Stat"),
  comp("Lens<1> (Default<<Default>_Display State"),
  comp("Lens1<1> (Default<<Default>_Display Stat"),
  comp("Lens2<1> (Default<<Default>_Display Stat"),
  comp("Lens3<1> (Default<<Default>_Display Stat"),
  comp("Flight tube pt1Thread<1> (Default<<Defau"),
  comp("Flight tube collar<1> (Default<<Default>_"),
  comp("(-) Detector<1> (Default<<Default>_Displ", "part", "open"),
  { t: "Mates in Titanium Dimenssions_1", i: "fMates", d: 1, e: "closed" },
  { t: "History", i: "fHistory", d: 1, e: "closed" },
  { t: "Sensors", i: "fSensor", d: 1 },
  { t: "Annotations", i: "fAnno", d: 1, e: "closed" },
  { t: "Solid Bodies(1)", i: "fSolid", d: 1, e: "closed" },
  { t: "Material <not specified>", i: "material", d: 1 },
  { t: "Front Plane", i: "plane", d: 1 },
  { t: "Top Plane", i: "plane", d: 1 },
  { t: "Right Plane", i: "plane", d: 1 },
  { t: "Origin", i: "origin", d: 1 },
  { t: "Boss-Extrude1", i: "boss", d: 1, e: "closed" },
  comp("(-) Electron Gun<1> (Default<Display State", "asm"),
  comp("(-) Molecule-1<1> (Default<<Default>_Dis", "partHidden", "none"),
  comp("(-) FaradayCup<2> (Default<Display State-", "asm"),
  comp("(-) capillary<1> (Default<<Default>_Displa"),
  comp("(-) Solenoid_Trial<1> (Default<<Default>_"),
  comp("(-) Solenoid_Trial_Copper<1> (Default<<D"),
  comp("(-) Solenoid_Trial_Copper<2> (Default<<D"),
  { t: "Mates", i: "mates", e: "closed" },
];

const spaced = (t: string) =>
  t.split(/([<>])/).map((s, k) => (/[<>]/.test(s) ? <Angle key={k}>{s}</Angle> : s));

const TABS: [string, number, number?][] = [
  ["Layout", 63], ["Sketch", 62], ["Evaluate", 74], ["SOLIDWORKS Add-Ins", 173, 0.3], ["Simulation", 91, 0.1], ["MBD", 56],
];

const SidePanel = () => (
  <Side>
    <RibbonTabs>
      <RibbonTab $w={89} $on $ls={0}>Assembly</RibbonTab>
      {TABS.map(([t, w, ls]) => <RibbonTab key={t} $w={w} $ls={ls}>{t}</RibbonTab>)}
    </RibbonTabs>
    <Tree>
      <Grip><Dot /></Grip>
      <TreeTabs>
        <TreeTab $on><Icon name="asm" size={18} /></TreeTab>
        <TreeTab><Icon name="proplist" size={19} /></TreeTab>
        <TreeTab><Icon name="config" size={18} /></TreeTab>
        <TreeTab><Icon name="target" size={18} /></TreeTab>
        <TreeTab><Icon name="ball" size={20} /></TreeTab>
        <Chevron width="10" height="12" viewBox="0 0 10 12">
          <path d="M2 1.500 7 6l-5 4.500" fill="none" stroke="#777" strokeWidth="2" />
        </Chevron>
      </TreeTabs>
      <FilterBox>
        <Icon name="filter" size={18} />
        <Caret />
      </FilterBox>
      <Rows>
        {NODES.map((n, k) => (
          <Row key={k} $d={n.d ?? 0}>
            {n.d !== -1 && <Expander $state={n.e} />}
            <Icon name={n.i} size={18} />
            {n.cap && <CapGap><Icon name="cap" size={20} /></CapGap>}
            <RowText>{spaced(n.t)}</RowText>
          </Row>
        ))}
      </Rows>
      <Rollback />
      <TreeRest />
      <HScroll>
        <svg width="8" height="12" viewBox="0 0 8 12"><path d="M7 1.500 2 6l5 4.500" fill="none" stroke="#555" strokeWidth="2" /></svg>
        <Thumb />
        <svg width="8" height="12" viewBox="0 0 8 12"><path d="M1 1.500 6 6l-5 4.500" fill="none" stroke="#555" strokeWidth="2" /></svg>
      </HScroll>
    </Tree>
    <Handle><Dot /></Handle>
  </Side>
);

/* --------------------------------------------------------------- canvas */

const Canvas = styled.section`
  flex: 1;
  position: relative;
  background: #fff;
`;
const HeadsUp = styled.div`
  position: absolute;
  left: 768px;
  top: 4px;
  height: 23px;
  display: flex;
  align-items: center;
`;
const DocButtons = styled.div`
  position: absolute;
  right: 6px;
  top: 4px;
  height: 23px;
  display: flex;
  align-items: center;
`;
const DocButton = styled.span`
  width: 26px;
  display: flex;
  justify-content: center;
  color: #a4a4a4;
`;
const TaskTabs = styled.div`
  position: absolute;
  right: -3px;
  top: 57px;
  width: 34px;
  border: 1px solid ${LINE};
  border-bottom: 0;
  z-index: 3;
`;
const TaskTab = styled.div<{ $on?: boolean }>`
  height: 30px;
  display: flex;
  align-items: center;
  justify-content: center;
  border-bottom: 1px solid ${LINE};
  margin-right: ${(p) => (p.$on ? -1 : 0)}px;
  background: ${(p) => (p.$on ? PANEL : "#d4d4d4")};
`;

const CX = 1240;
const CY = 735;
const poly = (r: number, n: number, phase: number, dx = 0, dy = 0) =>
  Array.from({ length: n }, (_, k) => {
    const a = ((phase + (k * 360) / n) * Math.PI) / 180;
    return `${(CX + dx - r * Math.sin(a)).toFixed(1)} ${(CY + dy - r * Math.cos(a)).toFixed(1)}`;
  }).join("L");
const ringPath = (dx: number, dy: number) => `M${poly(370.3, 54, 4.4, dx, dy)}ZM${poly(312.800, 48, 3.7, dx, dy)}Z`;
const bolts = Array.from({ length: 20 }, (_, k) => {
  const a = ((5 + k * 18) * Math.PI) / 180;
  return [CX - 189 * Math.sin(a), CY - 0.5 - 189 * Math.cos(a)];
});
const screws = Array.from({ length: 6 }, (_, k) => {
  const a = ((-10 + k * 60) * Math.PI) / 180;
  return [CX - 21 * Math.sin(a), CY - 21 * Math.cos(a)];
});
const arc = (r: number, a0: number, a1: number) => {
  const p = (a: number) => `${CX + r * Math.cos((a * Math.PI) / 180)} ${CY + r * Math.sin((a * Math.PI) / 180)}`;
  return `M${p(a0)}A${r} ${r} 0 0 1 ${p(a1)}`;
};

const PlateHole = ({ x, y, rx, ry, id }: { x: number; y: number; rx: number; ry: number; id: string }) => (
  <g transform={`translate(${x} ${y}) rotate(-14)`}>
    <clipPath id={id}><ellipse rx={rx} ry={ry} /></clipPath>
    <ellipse rx={rx} ry={ry} fill="#fff" />
    <g clipPath={`url(#${id})`}>
      <rect x={rx * 0.42} y={-ry} width={rx * 0.6} height={ry * 1.4} fill="url(#shade)" stroke="none" />
      <ellipse cx={rx * 0.08} cy={ry * 0.7} rx={rx * 1.02} ry={ry} fill="#fff" />
    </g>
    <ellipse rx={rx} ry={ry} />
  </g>
);

const Model = () => (
  <svg width="1896" height="1228" viewBox="361 120 1896 1228" stroke="#000" strokeWidth="1.200" fill="none" strokeLinejoin="round">
    <defs>
      <linearGradient id="shade"><stop offset="0" stopColor="#fff" /><stop offset=".6" stopColor="#c4c4c4" /><stop offset="1" stopColor="#fff" /></linearGradient>
      <linearGradient id="bore"><stop offset="0" stopColor="#555" /><stop offset="1" stopColor="#bbb" /></linearGradient>
      <linearGradient id="orange" x2="0" y2="1"><stop offset="0" stopColor="#ff8c1a" /><stop offset="1" stopColor="#d95f00" /></linearGradient>
      <linearGradient id="crescent" x2="0" y2="1"><stop offset="0" stopColor="#888" /><stop offset=".5" stopColor="#dcdcdc" /><stop offset="1" stopColor="#aaa" /></linearGradient>
      <clipPath id="bore0"><path d={`M${poly(155.8, 48, 3.7)}Z`} /></clipPath>
    </defs>

    <path d="M942 642 1101.500 1015 1145 1033 1523 872 1536 832z" fill="#444" />
    <path d="M960 599 1335 439 1377 456 1536 831 1522 870 1145 1031 1103.500 1014 943.500 641z" fill="#ababab" />
    <path d="M960 599 1097.300 540 1004 774 943.500 641z" fill="#6b6b6b" />
    <path d="M1198 496.700 1335 439 1377 456 1434 591.700z" fill="#a2a2a2" />
    <path d="M1477.700 692.700 1536 831 1522 870 1384.500 931z" fill="#8a8a8a" />
    <path d="M1046.700 877 1282 973 1145 1031 1103.500 1014z" fill="#545454" />
    <path d={`M${poly(179, 48, 3.700)}Z`} />
    {bolts.map(([x, y], k) => <circle key={k} cx={x} cy={y} r="6.800" />)}
    {[[1011.300, 642.300, 20], [1469.500, 826, 20], [1332.300, 505.500, -72], [1148, 963.700, -72]].map(([x, y, r]) => (
      <g key={x} transform={`translate(${x} ${y}) rotate(${r})`}>
        <ellipse rx="9" ry="14.500" fill="#777" />
        <ellipse cx="1" rx="7" ry="12" fill="url(#bore)" />
      </g>
    ))}

    <path d={`M${poly(155.8, 48, 3.7)}Z`} fill="#fff" />
    <g clipPath="url(#bore0)">
      <path d="M1352 622 1396 722 1402 740 1402 700 1375 640z" fill="url(#crescent)" stroke="none" />
      <path d="M1247 580 1134.700 627.300 1244.300 885.300 1370 833" strokeWidth="1.400" />
      <path d="M1135.500 630 1243.500 884" strokeWidth="1.800" />
      <path d="M1167 702 1343 628M1213 809 1392 733.500" />
      <PlateHole id="h1" x={1201.500} y={643.500} rx={41} ry={30} />
      <PlateHole id="h2" x={1280} y={610.500} rx={31} ry={23} />
      <PlateHole id="h3" x={1278} y={825} rx={41} ry={30} />
      <PlateHole id="h4" x={1357} y={793} rx={31} ry={23} />
      <path d="M1338.500 613.500 1350 624.500 1397 729 1396.500 748z" fill="#0dff1f" />
      <path d="M1352.500 625 1397.500 727" strokeWidth="1.600" />
      {[[1159, 631], [1221, 605], [1181, 683], [1243, 656], [1237, 812.500], [1299, 786], [1258, 865], [1321, 838]].map(([x, y]) => (
        <circle key={x} cx={x} cy={y} r="3.200" strokeWidth="1" />
      ))}
      <path d="M1228 655l6-3.500 1 4-5 3zM1290 797l7-3 1 4z" fill="#5fd0d0" strokeWidth=".8" />
      <path d="M1184 673l6-3 1 5zM1244 818l6-7 .5 6z" fill="#b8583a" strokeWidth=".8" />
      <path d="M1281 631l12-5" stroke="#7a7420" strokeWidth="2" />
      <circle cx="1255" cy="684.500" r="3.600" fill="#8ff0f8" />
      <circle cx="1287" cy="758" r="3.600" fill="#8ff0f8" />
      <circle cx="1193.500" cy="711" r="3.600" fill="#f5a878" />
      <circle cx="1225" cy="784.500" r="3.600" fill="#f5a878" />
      <circle cx="1365.500" cy="681.500" r="1.200" />
    </g>

    <circle cx="1318.700" cy="701" r="31.300" fill="#fffa9c" />
    <path d="M1298 678A31.300 31.300 0 0 0 1320 732.300z" fill="url(#orange)" />
    <path d="M1298 678 1321 732M1312.500 670.500 1336 727" strokeWidth="2.600" />
    <circle cx="1315.700" cy="698" r="3.500" strokeWidth="1" />
    <circle cx="1330.500" cy="691.500" r="3.500" strokeWidth="1" />

    <circle cx={CX} cy={CY} r="42" fill="#fff" />
    <path d={arc(38, 100, 214)} stroke="#fc9" strokeWidth="7" />
    <path d={arc(38, -82, 55)} stroke="#a5f6fb" strokeWidth="7" />
    <path d={arc(38, 214, 278)} strokeWidth="1.500" />
    <path d={arc(38, 55, 100)} strokeWidth="1.500" />
    <circle cx={CX} cy={CY} r="42" strokeWidth="1.500" />
    <circle cx={CX} cy={CY} r="34.500" fill="#fff" strokeWidth="1.500" />
    <circle cx={CX} cy={CY} r="28" strokeWidth="1.800" />
    <circle cx={CX} cy={CY} r="26" fill="#0dff1f" />
    <circle cx={CX} cy={CY} r="13" fill="#2c5a1c" strokeWidth="1.800" strokeDasharray="2 1.500" />
    <circle cx={CX} cy={CY} r="11" fill="#8a4420" />
    <path d="M1222 742 1259 728" strokeWidth="4.500" />
    <path d="M1222 742 1259 728" stroke="#fff" strokeWidth="2.200" />
    {screws.map(([x, y], k) => (
      <g key={k}>
        <circle cx={x} cy={y} r="4" fill="#ddd" />
        <circle cx={x} cy={y} r="1.500" />
      </g>
    ))}
    <path d="M1147.500 768 1186 752.500 1190 762 1152 779z" fill="#f0f" />

    <path d={ringPath(-1.400, 1.700)} fill="#8c8a20" fillRule="evenodd" />
    <path d={ringPath(0, 0)} fill="#fffb4d" fillRule="evenodd" />

    <g stroke="none">
      <path d="M413 1277 436 1267.500 433.500 1264 448 1265 440 1274.500 438 1271.500 415 1281z" fill="#c41818" />
      <path d="M416 1278.500 438 1269.500" stroke="#f3a0a0" />
      <path d="M411.500 1281 421 1305 417 1306 427.500 1315 428 1302 425 1303.500 416 1280z" fill="#1c1cc0" />
      <path d="M414.500 1282 423 1304" stroke="#a9a9f5" />
      <circle cx="412" cy="1279.500" r="6" fill="#124012" />
    </g>
    <path d="M409 1274l3 4 3-4M412 1278v5" stroke="#0a8a0a" />
    <g stroke="none" fontFamily="Liberation Sans, sans-serif" fontSize="14">
      <text x="446" y="1266.500" fill="#f00">X</text>
      <text x="423" y="1325" fill="#00f">Z</text>
    </g>
  </svg>
);

const HEADS: [string, number][] = [
  ["zoomFit", 26], ["zoomArea", 26], ["prev", 26], ["section", 26], ["dyn", 25], ["orient", 28], [">", 10],
  ["display", 34], [">", 4], ["eye", 37], [">", 0], ["ballPen", 42], ["scene", 12], [">", 26], ["monitor", 17], [">", 22],
];

const CanvasArea = () => (
  <Canvas>
    <Model />
    <HeadsUp>
      {HEADS.map(([n, w], k) => (
        <Slot key={k} $w={w}>{n === ">" ? <Caret $c="#999" /> : <Icon name={n} size={20} />}</Slot>
      ))}
    </HeadsUp>
    <DocButtons>
      {["dockL", "dockR", "min", "restore", "close"].map((n) => (
        <DocButton key={n}><Icon name={n} size={16} /></DocButton>
      ))}
    </DocButtons>
    <TaskTabs>
      {["home", "books", "folderOpen", "palette", "ball", "proplist"].map((n, k) => (
        <TaskTab key={n} $on={k === 0}><Icon name={n} size={19} /></TaskTab>
      ))}
    </TaskTabs>
  </Canvas>
);

/* ---------------------------------------------------------- bottom tabs */

const SheetBar = styled.div`
  height: 20px;
  flex: none;
  display: flex;
  background: ${PANEL};
  border-top: 1px solid ${LINE};
  border-right: 1px solid #9fb2bd;
  padding-left: 2px;
`;
const NavButton = styled.span`
  width: 20px;
  display: flex;
  align-items: center;
  justify-content: center;
  border: 1px solid #8d8da8;
  background: #a5a5bf;
`;
const Sheet = styled.span<{ $w: number; $on?: boolean; $shift?: number }>`
  width: ${(p) => p.$w}px;
  display: flex;
  align-items: center;
  justify-content: center;
  text-indent: ${(p) => p.$shift ?? 0}px;
  font-size: 14.500px;
  letter-spacing: ${(p) => (p.$on ? 0.4 : 0.1)}px;
  white-space: nowrap;
  font-weight: ${(p) => (p.$on ? 700 : 400)};
  color: ${(p) => (p.$on ? "#000" : "#333")};
  background: ${(p) => (p.$on ? PANEL : "#d4d4d4")};
  border-right: 1px solid ${LINE};
`;
const NAV = ["M3 2v10M11 2v10L5 7z", "M9.500 2v10l-6-5z", "M4.500 2v10l6-5z", "M3 2v10l6-5zM11 2v10"];

const Sheets = () => (
  <SheetBar>
    {NAV.map((d) => (
      <NavButton key={d}>
        <svg width="14" height="14" viewBox="0 0 14 14"><path d={d} fill="#85859c" stroke="#85859c" /></svg>
      </NavButton>
    ))}
    <Sheet $w={77} $on $shift={4}>Model</Sheet>
    <Sheet $w={89}>3D Views</Sheet>
    <Sheet $w={144} $shift={-9}>Motion Study 1</Sheet>
  </SheetBar>
);

/* ------------------------------------------------------- resources pane */

const Pane = styled.aside`
  width: 303px;
  flex: none;
  background: ${PANEL};
  border-left: 2px solid #111;
  border-bottom: 1px solid #111;
`;
const PaneHead = styled.div`
  height: 23px;
  display: flex;
  align-items: center;
  background: #adaeb3;
  border-bottom: 1px solid #222;
  font-size: 14.500px;
  font-weight: 700;
  color: #000;
  padding: 0 4px 0 11px;
  white-space: nowrap;
`;
const PaneTitle = styled.span`
  flex: 1;
  text-align: center;
  margin: -1px 0 0 5px;
`;
const Welcome = styled.div`
  height: 91px;
  padding: 32px 0 0 16px;
`;
const Group = styled.div<{ $h: number }>`
  height: ${(p) => p.$h}px;
  margin: 0 30px 0 16px;
  border-top: 1px solid ${LINE};
`;
const GroupHead = styled.div`
  height: 23px;
  display: flex;
  align-items: center;
  justify-content: space-between;
  padding: 0 8px 0 4px;
  font-size: 12.700px;
  font-weight: 700;
  color: #333;
`;
const Link = styled.div`
  height: 32px;
  display: flex;
  align-items: center;
  gap: 4px;
  padding-left: 1px;
  font-size: 12px;
  color: #555;
  letter-spacing: 0.18px;
`;

const GROUPS: { t: string; h: number; items: [string, string][] }[] = [
  {
    t: "SOLIDWORKS Tools", h: 246, items: [
      ["Property Tab Builder", "swTab"], ["SOLIDWORKS Rx", "swRx"], ["Performance Benchmark Test", "swRx"],
      ["Compare My Score", "compare"], ["Copy Settings Wizard", "wizard"], ["My Products", "products"],
    ],
  },
  { t: "Online Resources", h: 118, items: [["3DEXPERIENCE Marketplace", "market"], ["Partner Solutions", "shake"]] },
  { t: "Subscription Services", h: 60, items: [["Subscription Services", "subs"]] },
];

const Resources = () => (
  <Pane>
    <PaneHead>
      <svg width="12" height="12" viewBox="0 0 12 12"><path d="M6 2 2 6l4 4M10.500 2l-4 4 4 4" fill="none" stroke="#222" strokeWidth="1.600" /></svg>
      <PaneTitle>SOLIDWORKS Resources</PaneTitle>
      <Slot $w={18}><Icon name="gear" size={16} /></Slot>
      <Slot $w={19}><Icon name="pinDark" size={14} /></Slot>
    </PaneHead>
    <Welcome>
      <Link><Icon name="home" size={19} /><span>Welcome to SOLIDWORKS</span></Link>
    </Welcome>
    {GROUPS.map((g) => (
      <Group key={g.t} $h={g.h}>
        <GroupHead>
          <span>{g.t}</span>
          <svg width="12" height="8" viewBox="0 0 12 8"><path d="M1 7l5-5 5 5" fill="none" stroke="#666" strokeWidth="1.700" /></svg>
        </GroupHead>
        {g.items.map(([t, i]) => <Link key={t}><Icon name={i} size={20} /><span>{t}</span></Link>)}
      </Group>
    ))}
  </Pane>
);

/* ----------------------------------------------------------- status bar */

const Status = styled.footer`
  height: 22px;
  flex: none;
  display: flex;
  align-items: center;
  background: ${PANEL};
  border-top: 1px solid ${LINE};
  font-size: 14px;
  letter-spacing: 0.15px;
  padding: 2px 0 0 1px;
  white-space: nowrap;
`;
const StatusText = styled.span<{ $w: number }>`
  width: ${(p) => p.$w}px;
  flex: none;
`;
const StatusSep = styled.i<{ $w: number }>`
  width: ${(p) => p.$w}px;
  height: 19px;
  flex: none;
  border-left: 1px solid #d4d4d4;
`;
const UpCaret = styled.i`
  border: 3px solid transparent;
  border-top: 0;
  border-bottom: 4px solid #444;
  margin: 0 68px 0 0;
`;

const StatusBar = () => (
  <Status>
    <StatusText $w={2224}>SOLIDWORKS Education Edition - Instructional Use Only</StatusText>
    <StatusText $w={103}>Under Defined</StatusText>
    <StatusSep $w={8} /><StatusSep $w={8} /><StatusSep $w={16} /><StatusSep $w={39} />
    <StatusText $w={69}>MMGS</StatusText>
    <UpCaret />
    <Icon name="tag" size={17} />
  </Status>
);

/* -------------------------------------------------------------- taskbar */

const Taskbar = styled.div`
  height: 50px;
  flex: none;
  display: flex;
  background: linear-gradient(90deg, #1c1c1b 0, #1c1c1b 60px, #474034 420px, #4a4236 2100px, #474034 2180px, #1f1e1c 2260px, #1a1a1a 2560px);
`;
const StartButton = styled.div`
  width: 60px;
  flex: none;
  display: flex;
  align-items: center;
  justify-content: center;
  background: #1b1b1b;
`;
const TaskSearch = styled.div`
  width: 360px;
  flex: none;
  display: flex;
  align-items: center;
  padding-left: 14px;
  gap: 14px;
  background: #f2f2f2;
  border: 1px solid #c8c8c8;
  border-left-color: #fff;
  font-size: 17.800px;
  color: #444;
  white-space: nowrap;
`;
const AppButton = styled.div<{ $w: number; $on?: boolean }>`
  width: ${(p) => p.$w}px;
  flex: none;
  display: flex;
  flex-direction: column;
  align-items: center;
  background: ${(p) => (p.$on ? "#6c655c" : "transparent")};
`;
const AppIcon = styled.div`
  height: 47px;
  display: flex;
  align-items: center;
`;
const Running = styled.i<{ $w: number }>`
  width: ${(p) => p.$w}px;
  height: 3px;
  background: #76b9ed;
`;
const Stack = styled.div`
  width: 5px;
  background: linear-gradient(#5a5349 47px, #4f86ad 47px);
  border-left: 1px solid #38322a;
`;
const Tray = styled.div`
  margin-left: auto;
  display: flex;
  align-items: center;
  color: #fff;
  font-size: 14px;
`;
const TrayItem = styled.span<{ $w: number }>`
  width: ${(p) => p.$w}px;
  display: flex;
  justify-content: center;
`;
const Clock = styled.div`
  width: 84px;
  margin-left: 3px;
  line-height: 23px;
  letter-spacing: 0.15px;
  text-align: center;
  white-space: nowrap;
`;
const Peek = styled.i`
  height: 50px;
  width: 6px;
  margin-left: 6px;
  border-left: 1px solid #666;
`;

const APPS: Record<string, React.ReactNode> = {
  view: <path d="M5 6v4h12V6M5 26v-4h12v4M5 10h12v12H5zM23 6v4M23 20v6M23 13v3.500" fill="none" stroke="#fff" strokeWidth="1.400" />,
  explorer: (
    <g>
      <path d="M3 4h11l2 3H3z" fill="#d99a00" />
      <path d="M2.500 6.500h27V29h-27z" fill="#fdd567" />
      <path d="M7.500 29V17.500h17V29h-3.500v-6h-10v6z" fill="#2f8fe0" />
    </g>
  ),
  firefox: (
    <g>
      <circle cx="16" cy="17.500" r="13.500" fill="#ff3d4e" />
      <path d="M19 1c1 5 11 7 10.500 17C29 27 22 31 15 31c8-2 12-6 11-13-.5-4-3-6-6-7z" fill="#ffc23a" />
      <path d="M4 8c2 2 6 1 10 3 3 0 6 1 8 5L9 18c-5-2-7-5-5-10z" fill="#ff9a2a" />
      <circle cx="16.500" cy="17.500" r="6.500" fill="#8447e0" />
    </g>
  ),
  calc: (
    <g>
      <rect x="4.500" y="1" width="23" height="30" rx="1.500" fill="#6f7f8c" />
      <path d="M7.500 4h17v5h-17z" fill="#4fd2f5" />
      <path d="M7.500 11.500h4.700v4.700H7.500zM13.700 11.500h4.700v4.700h-4.700zM19.900 11.500h4.700v4.700h-4.700zM7.500 17.600h4.700v4.700H7.500zM13.700 17.600h4.700v4.700h-4.700zM7.500 23.600h4.700v4.700H7.500zM13.700 23.600h4.700v4.700h-4.700z" fill="#d7dee4" />
      <path d="M19.900 17.600h4.700v10.700h-4.700z" fill="#124a8c" />
    </g>
  ),
  sw: (
    <g fontFamily="Liberation Sans, sans-serif" fontWeight="700" fill="#fff">
      <path d="M2 6 15 1l14 4-.5 18L16 30 2.500 24z" fill="#c4161c" stroke="#3a0506" />
      <path d="M2 6l14 4L29 5M16 10v20" fill="none" stroke="#6a0a0e" />
      <text x="4" y="22" fontSize="16">S</text>
      <text x="16.500" y="20.500" fontSize="13">W</text>
      <text x="13" y="31" fontSize="8" stroke="#222" strokeWidth="1.500" paintOrder="stroke">2019</text>
    </g>
  ),
  word: (
    <g>
      <path d="M17 5.500h12.500v20.500H17z" fill="#fff" stroke="#2b579a" />
      <path d="M19 9h9M19 12h9M19 15h9M19 18h9M19 21h9" stroke="#2b579a" strokeWidth="1.500" />
      <path d="M2 4.500 18 1.500v28L2 26.500z" fill="#2b579a" />
      <text x="4" y="20" fontSize="12.500" fontWeight="700" fill="#fff" fontFamily="Liberation Sans, sans-serif">W</text>
    </g>
  ),
  settings: (
    <g fill="none" stroke="#fff">
      <circle cx="16" cy="16" r="6.800" strokeWidth="3" />
      <circle cx="16" cy="16" r="9.600" strokeWidth="3.400" strokeDasharray="3.600 3.940" strokeDashoffset="1.800" />
    </g>
  ),
  printer: (
    <g>
      <path d="M14 8 17 1.500h12L25 14H12z" fill="#f4f4f4" stroke="#889" strokeWidth=".8" />
      <path d="M27 5l3 2-2 16-7 7-2-6z" fill="#77848f" />
      <path d="M5 17l6-4.500h15l-3 11L3 22z" fill="#a9b5bf" stroke="#3b4650" strokeWidth=".8" />
      <path d="M2 23l20 1-2 6-18-4.500z" fill="#dde3e8" stroke="#3b4650" strokeWidth=".6" />
      <path d="M9 15h12l-2 4H7z" fill="#e7ecef" />
      <path d="M13 16h5l-1.500 2.500h-5z" fill="#4a9fd0" />
    </g>
  ),
};

const Scholar = () => (
  <svg width="76" height="48" viewBox="0 0 76 48">
    <path d="M9 48c4-9 10-12 17-13l7-5c9 3 15 9 18 18z" fill="#3f86c8" />
    <path d="M20 48l8-12 4 4-5 8z" fill="#fff" />
    <path d="M28 34l5-4 3 8-8 10z" fill="#2a64a0" />
    <path d="M6 10c-2 10 0 20 4 26 5 3 13 0 18-6l5-8V9z" fill="#f2c8ae" />
    <path d="M3 12C2 5 9 0 17 1c10-2 19 4 18 14 0 6-2 11-5 14 0-6 1-11-3-16-8 1-15-1-20-4-1 2-2 4-1 9-2-1-3-4-3-6z" fill="#dccfb4" />
    <path d="M6 7c6-4 15-5 21 1 4 4 5 9 4 14" fill="none" stroke="#f4ecdc" strokeWidth="2" />
    <g fill="none" stroke="#333"><circle cx="10" cy="19" r="3.500" /><circle cx="19" cy="18.500" r="3.700" /><path d="M22.500 18l6-1.500" /></g>
    <path d="M10 31c2-1.500 4-1.500 7-.5" stroke="#a04a3a" strokeWidth="1.300" fill="none" />
    <path d="M54 14h6v34h-6z" fill="#e89a3c" /><path d="M60.500 13h6v35h-6z" fill="#b8281e" /><path d="M67 13h6v35h-6z" fill="#2f7f72" />
    <path d="M54 18h6M54 42h6M60.500 18h6M60.500 42h6M67 18h6M67 24h6M67 34h6M67 42h6" stroke="#f3d27a" />
  </svg>
);

const AppView = ({ n }: { n: string }) => (
  <AppIcon><svg width="31" height="31" viewBox="0 0 32 32">{APPS[n]}</svg></AppIcon>
);

const WindowsTaskbar = () => (
  <Taskbar>
    <StartButton>
      <svg width="20" height="20" viewBox="0 0 20 20"><path d="M0 2.800 8.200 1.600V9.500H0zM9.200 1.500 20 0v9.500H9.200zM0 10.500h8.200v8L0 17.300zM9.200 10.500H20V20L9.200 18.500z" fill="#fff" /></svg>
    </StartButton>
    <TaskSearch>
      <svg width="21" height="21" viewBox="0 0 21 21"><circle cx="13" cy="8" r="6.500" fill="none" stroke="#222" strokeWidth="1.500" /><path d="M8.500 12.500 1 20" stroke="#222" strokeWidth="1.600" /></svg>
      <span>Type here to search</span>
      <Grow />
      <Scholar />
    </TaskSearch>
    <AppButton $w={60}><AppView n="view" /></AppButton>
    <AppButton $w={67}><AppView n="explorer" /><Running $w={51} /></AppButton>
    <AppButton $w={57}><AppView n="firefox" /></AppButton>
    <AppButton $w={66}><AppView n="calc" /></AppButton>
    <AppButton $w={56} $on><AppView n="sw" /><Running $w={56} /></AppButton>
    <Stack />
    <AppButton $w={62}><AppView n="word" /><Running $w={51} /></AppButton>
    <AppButton $w={61}><AppView n="settings" /><Running $w={51} /></AppButton>
    <AppButton $w={62}><AppView n="printer" /><Running $w={51} /></AppButton>
    <Tray>
      <TrayItem $w={30}><svg width="17" height="10" viewBox="0 0 17 10"><path d="M1 9l7.500-7.500L16 9" fill="none" stroke="#fff" strokeWidth="1.500" /></svg></TrayItem>
      <TrayItem $w={30}>
        <svg width="21" height="20" viewBox="0 0 21 20" fill="none" stroke="#fff" strokeWidth="1.300">
          <path d="M1 3l18-2.500V14M1 3v13.500l11 1.500M14 8a4.500 4.500 0 0 0-8 0M6 5v3h3M6 12a4.500 4.500 0 0 0 6 1" />
          <circle cx="16" cy="15" r="4.500" fill="#ff9b0a" stroke="none" />
        </svg>
      </TrayItem>
      <TrayItem $w={30}>
        <svg width="21" height="18" viewBox="0 0 21 18" fill="none" stroke="#fff" strokeWidth="1.300"><path d="M6 2h14v11H4V9M8 17h8M12 13v4M1 1h4v5H1zM3 6v7" /></svg>
      </TrayItem>
      <TrayItem $w={30}>
        <svg width="20" height="18" viewBox="0 0 20 18" fill="none" stroke="#fff" strokeWidth="1.300"><path d="M1 6h3l4-4v14l-4-4H1zM10.500 6.500c1 1.500 1 3.500 0 5M13.500 4.500c2 3 2 6 0 9" /><path d="M16.500 2c3 4 3 10 0 14" stroke="#888" /></svg>
      </TrayItem>
      <TrayItem $w={46}>ENG</TrayItem>
      <Clock>13:42<br />13-06-2025</Clock>
      <TrayItem $w={58}>
        <svg width="20" height="20" viewBox="0 0 20 20"><path d="M.7 1h18.600v15h-7L10 18.800 7.700 16h-7z" fill="none" stroke="#fff" strokeWidth="1.300" /></svg>
      </TrayItem>
      <Peek />
    </Tray>
  </Taskbar>
);

export default function App() {
  return (
    <Screen>
      <Global />
      <Title />
      <Ribbon />
      <Workspace>
        <MainColumn>
          <TopArea>
            <SidePanel />
            <CanvasArea />
          </TopArea>
          <Sheets />
        </MainColumn>
        <Resources />
      </Workspace>
      <StatusBar />
      <WindowsTaskbar />
    </Screen>
  );
}
